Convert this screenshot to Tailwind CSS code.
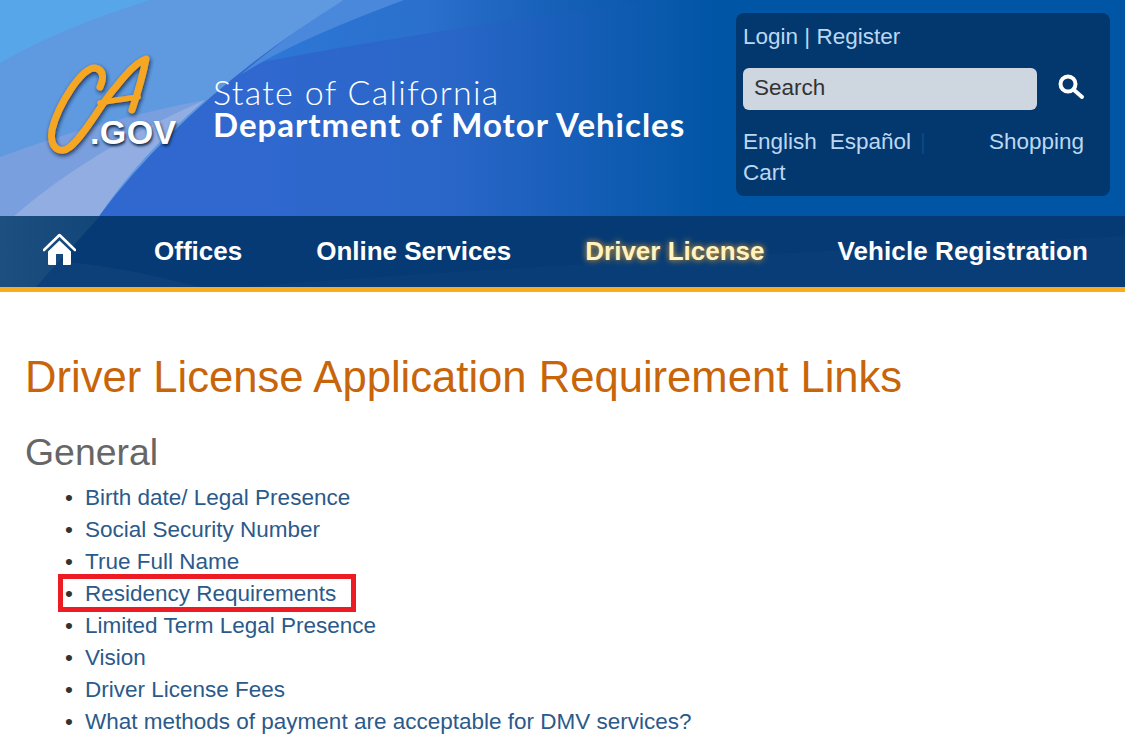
<!DOCTYPE html>
<html lang="en">
<head>
    <meta charset="UTF-8">
    <meta name="viewport" content="width=device-width, initial-scale=1.0">
    <title>Driver License Application Requirement Links</title>
    <script src="https://cdn.jsdelivr.net/npm/@tailwindcss/browser@4"></script>
</head>
<body class="bg-white font-['Liberation_Sans',Arial,sans-serif] overflow-hidden h-[743px]">
    <!-- header banner -->
    <header class="relative h-[216px] bg-[#0055a5] overflow-hidden flex">
        <!-- swoosh background -->
        <svg class="absolute inset-0" width="1125" height="216" viewBox="0 0 1125 216">
            <defs>
                <linearGradient id="base" x1="0" y1="0" x2="1" y2="0">
                    <stop offset="0.2" stop-color="#3068cf"/>
                    <stop offset="0.4" stop-color="#2a66c8"/>
                    <stop offset="0.64" stop-color="#0055a5"/>
                </linearGradient>
                <linearGradient id="band" x1="0" y1="0" x2="1" y2="0">
                    <stop offset="0" stop-color="#2f78d8"/>
                    <stop offset="0.45" stop-color="#2a70cc"/>
                    <stop offset="1" stop-color="#0055a5" stop-opacity="0"/>
                </linearGradient>
            </defs>
            <rect width="1125" height="216" fill="url(#base)"/>
            <!-- darker band under the light swoosh -->
            <path d="M240 75 Q300 30 404 0 L660 0 Q430 30 262 62 Z" fill="url(#band)"/>
            <path d="M240 75 Q300 25 344 0 L404 0 Q310 35 262 62 Z" fill="#4a88dc"/>
            <!-- main light area -->
            <path d="M0 0 L344 0 Q190 95 99 216 L0 216 Z" fill="#5f9ae0"/>
            <path d="M0 0 L150 0 Q60 28 0 63 Z" fill="#58a6ea"/>
            <!-- lower left light bands -->
            <path d="M0 157 Q100 120 205 100 Q140 155 99 216 L0 216 Z" fill="#7a9fde"/>
            <path d="M14 216 Q90 150 205 100 Q140 155 99 216 Z" fill="#92ade2"/>
        </svg>
        <!-- CA logo -->
        <div class="relative w-[736px] shrink-0 flex">
            <div class="relative w-[213px] shrink-0">
                <svg class="absolute left-[40px] top-[50px]" width="130" height="112" viewBox="0 0 130 112">
                    <defs>
                        <filter id="soft" x="-20%" y="-20%" width="140%" height="140%">
                            <feDropShadow dx="1" dy="2" stdDeviation="2.2" flood-color="#08213f" flood-opacity="0.85"/>
                        </filter>
                    </defs>
                    <g filter="url(#soft)" fill="none" stroke="#f5a623" stroke-linecap="round" stroke-linejoin="round">
                        <path stroke-width="7" d="M60 37 C64 28 64 20 55 18 C42 17 18 55 12 80 C9 98 20 105 30 97 C45 85 60 55 75 38 C85 26 95 13 106 9 C103 25 97 45 92 60"/>
                        <path stroke-width="5.5" d="M60 53 C72 50 86 49 98 47"/>
                    </g>
                </svg>
                <span class="absolute left-[90px] top-[109px] text-white font-bold text-[34px] leading-[46px] tracking-[0.4px] [text-shadow:1px_2px_3px_#0b2547]">.GOV</span>
            </div>
            <div class="pt-[75px] text-white">
                <div class="font-['Lato',sans-serif] font-light text-[34px] leading-[33px] tracking-[1.3px]">State of California</div>
                <div class="font-['Lato',sans-serif] font-bold text-[33px] leading-[33px] tracking-[1px]">Department of Motor Vehicles</div>
            </div>
        </div>
        <!-- account panel -->
        <div class="relative mt-[13px] w-[374px] h-[183px] bg-[#03386f] rounded-[8px] px-[7px] text-[22.5px] text-[#bcd7f2]">
            <div class="h-[47px] leading-[47px]">Login | Register</div>
            <div class="flex items-center h-[42px] mt-[8px]">
                <div class="w-[294px] h-[42px] bg-[#ced6e0] rounded-[6px] pl-[11px] leading-[40px] text-[#333333]">Search</div>
                <svg class="ml-[19px] -mt-[5px]" width="30" height="30" viewBox="0 0 30 30" fill="none" stroke="#ffffff" stroke-linecap="round">
                    <circle cx="12" cy="12" r="7.5" stroke-width="4"/>
                    <path d="M18 18 L26 25" stroke-width="4"/>
                </svg>
            </div>
            <div class="mt-[16px] leading-[31px]">
                <div class="flex w-[341px] justify-between">
                    <span class="flex gap-[13px]"><span>English</span><span>Español</span><span class="-ml-[4px] text-[#0a4a85]">|</span></span>
                    <span>Shopping</span>
                </div>
                <div>Cart</div>
            </div>
        </div>
    </header>

    <!-- main nav -->
    <nav class="relative h-[76px] bg-[#063a75] border-b-[5px] border-[#fbab1e] overflow-hidden">
        <svg class="absolute inset-0" width="1125" height="71" viewBox="0 0 1125 71">
            <defs>
                <linearGradient id="navfade" x1="0" y1="0" x2="1" y2="0">
                    <stop offset="0" stop-color="#1d4f7f"/>
                    <stop offset="1" stop-color="#124679"/>
                </linearGradient>
            </defs>
            <path d="M0 0 L100 0 L36 71 L0 71 Z" fill="url(#navfade)"/>
            <path d="M36 71 L60 45 Q130 52 200 71 Z" fill="#ffffff" opacity="0.03"/>
            <path d="M240 71 Q500 50 1125 20 L1125 71 Z" fill="#ffffff" opacity="0.015"/>
        </svg>
        <div class="relative flex items-center h-[71px] text-white font-bold text-[26px] pl-[43px]">
            <svg class="mr-[78px] -mt-[4px]" width="33" height="33" viewBox="0 0 33 33" fill="#ffffff">
                <path d="M1 17 L16.5 2 L32 17" fill="none" stroke="#ffffff" stroke-width="2.6" stroke-linecap="round" stroke-linejoin="round"/>
                <path d="M16.5 7.5 L5 18.5 L5 31 Q5 32 6 32 L13 32 L13 21 L20 21 L20 32 L27 32 Q28 32 28 31 L28 18.5 Z"/>
            </svg>
            <a class="mr-[74px]">Offices</a>
            <a class="mr-[74px]">Online Services</a>
            <a class="mr-[73px] text-[#fff3c4] [text-shadow:0_0_6px_#fbab1e]">Driver License</a>
            <a class="tracking-[0.1px]">Vehicle Registration</a>
        </div>
    </nav>

    <!-- page content -->
    <main class="pl-[25px] pt-[56px]">
        <h1 class="text-[43.6px] leading-[58px] text-[#c8650b]">Driver License Application Requirement Links</h1>
        <h2 class="mt-[24px] text-[37.4px] leading-[44px] text-[#666666]">General</h2>
        <div class="relative mt-[8px]">
            <ul class="pl-[40px] text-[22.5px] leading-[32px] text-[#2b5a8a]">
                <li class="flex"><span class="w-[20px] text-[#333333]">•</span>Birth date/ Legal Presence</li>
                <li class="flex"><span class="w-[20px] text-[#333333]">•</span>Social Security Number</li>
                <li class="flex"><span class="w-[20px] text-[#333333]">•</span>True Full Name</li>
                <li class="flex"><span class="w-[20px] text-[#333333]">•</span>Residency Requirements</li>
                <li class="flex"><span class="w-[20px] text-[#333333]">•</span>Limited Term Legal Presence</li>
                <li class="flex"><span class="w-[20px] text-[#333333]">•</span>Vision</li>
                <li class="flex"><span class="w-[20px] text-[#333333]">•</span>Driver License Fees</li>
                <li class="flex"><span class="w-[20px] text-[#333333]">•</span>What methods of payment are acceptable for DMV services?</li>
            </ul>
            <!-- red annotation box -->
            <div class="absolute left-[33px] top-[92px] w-[298px] h-[38px] border-[5px] border-[#ed1c24]"></div>
        </div>
    </main>
</body>
</html>
